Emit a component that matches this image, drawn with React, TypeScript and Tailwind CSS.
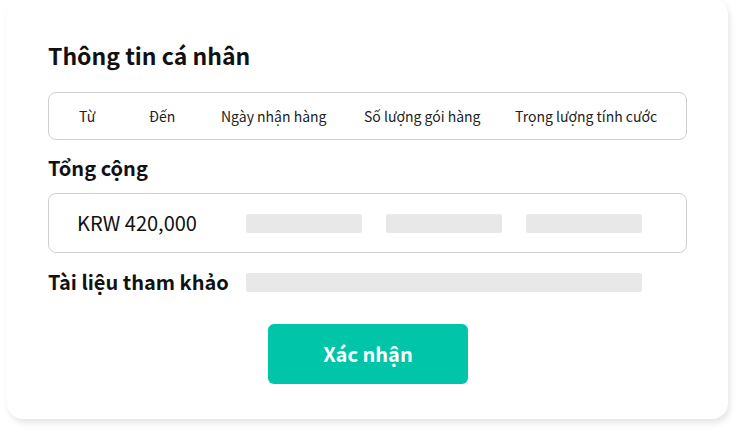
const columns: readonly { label: string; width: string }[] = [
  { label: "Từ", width: "w-[70px]" },
  { label: "Đến", width: "w-[72px]" },
  { label: "Ngày nhận hàng", width: "w-[143px]" },
  { label: "Số lượng gói hàng", width: "w-[151px]" },
  { label: "Trọng lượng tính cước", width: "" },
];

const font = { fontFamily: '"Noto Sans CJK KR", "Noto Sans", sans-serif' };

const GrayBar = ({ className }: { className: string }) => (
  <div className={`h-[19px] rounded-[2px] bg-[#e8e8e8] ${className}`} />
);

const App = () => {
  return (
    <div className="w-[744px] h-[436px] bg-white overflow-hidden" style={font}>
      <div className="ml-[7px] -mt-[2px] w-[721px] h-[421px] rounded-[16px] bg-white shadow-[2px_4px_6px_rgba(0,0,0,0.10)] pl-[41px] pr-[41px] pt-[41px]">
        <h1 className="text-[23px] leading-[32px] font-semibold text-[#111]">
          Thông tin cá nhân
        </h1>

        <div className="mt-[21px] h-[48px] w-[639px] rounded-[8px] border border-[#cfcfcf] flex items-center pl-[30px] text-[14px] text-[#222]">
          {columns.map((col) => (
            <span key={col.label} className={`shrink-0 ${col.width}`}>
              {col.label}
            </span>
          ))}
        </div>

        <h2 className="mt-[14px] text-[20px] leading-[28px] font-semibold text-[#111]">
          Tổng cộng
        </h2>

        <div className="mt-[11px] h-[60px] w-[639px] rounded-[8px] border border-[#cfcfcf] flex items-center">
          <span className="ml-[28px] w-[169px] shrink-0 text-[20px] text-[#111]">KRW 420,000</span>
          <GrayBar className="w-[116px]" />
          <GrayBar className="ml-[24px] w-[116px]" />
          <GrayBar className="ml-[24px] w-[116px]" />
        </div>

        <div className="mt-[15px] flex items-center">
          <h2 className="w-[198px] shrink-0 text-[20px] leading-[28px] font-semibold text-[#111]">
            Tài liệu tham khảo
          </h2>
          <GrayBar className="w-[396px]" />
        </div>

        <div className="mt-[28px] flex justify-center">
          <button
            type="button"
            className="ml-[1px] h-[60px] w-[200px] rounded-[6px] bg-[#00c5a8] text-white text-[20px] font-bold"
          >
            Xác nhận
          </button>
        </div>
      </div>
    </div>
  );
};

export default App;
